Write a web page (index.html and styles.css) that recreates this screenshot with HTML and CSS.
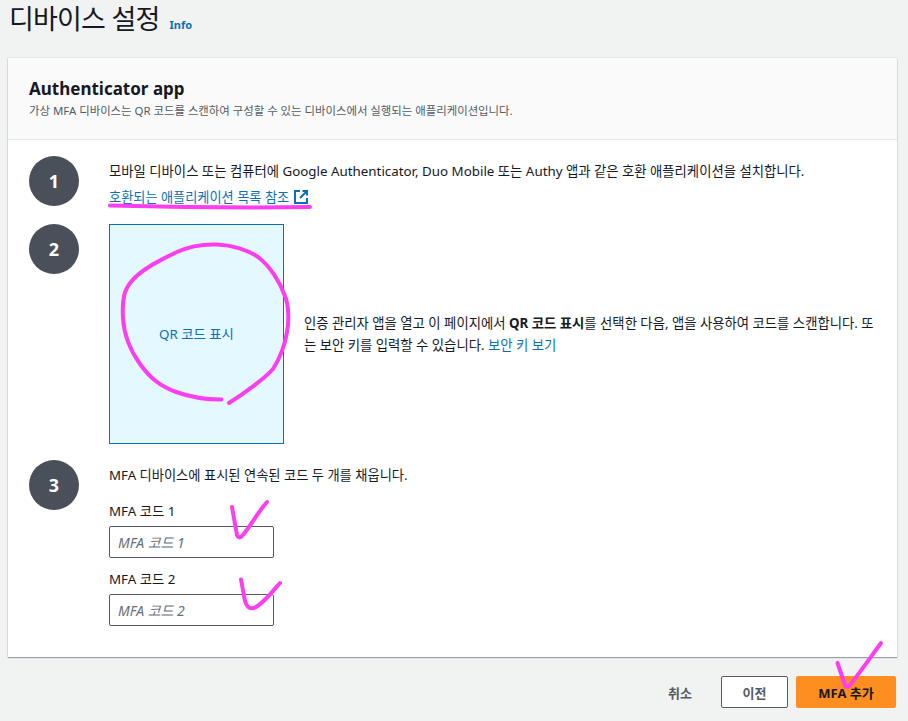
FILE: index.html
```html
<!DOCTYPE html>
<html lang="ko">
<head>
    <meta charset="UTF-8">
    <meta name="viewport" content="width=device-width, initial-scale=1.0">
    <title>디바이스 설정</title>
    <link rel="stylesheet" href="styles.css">
</head>
<body>
    <div class="page-title">
        <h1>디바이스 설정</h1>
        <a class="info-link" href="#">Info</a>
    </div>

    <div class="card">
        <div class="card-header">
            <h2>Authenticator app</h2>
            <p>가상 MFA 디바이스는 QR 코드를 스캔하여 구성할 수 있는 디바이스에서 실행되는 애플리케이션입니다.</p>
        </div>

        <div class="card-body">
            <div class="step">
                <div class="step-number">1</div>
                <div class="step-content">
                    <p class="step-text">모바일 디바이스 또는 컴퓨터에 Google Authenticator, Duo Mobile 또는 Authy 앱과 같은 호환 애플리케이션을 설치합니다.</p>
                    <a class="link external-link" href="#">호환되는 애플리케이션 목록 참조
                        <svg width="14" height="14" viewBox="0 0 14 14" fill="none" stroke="currentColor" stroke-width="2">
                            <path d="M6 1H1v12h12V8"/>
                            <path d="M8.5 1H13v4.5"/>
                            <path d="M13 1L6 8"/>
                        </svg>
                    </a>
                </div>
            </div>

            <div class="step">
                <div class="step-number">2</div>
                <div class="step-content qr-row">
                    <div class="qr-box"><a class="link" href="#">QR 코드 표시</a></div>
                    <p class="qr-text">인증 관리자 앱을 열고 이 페이지에서 <b>QR 코드 표시</b>를 선택한 다음, 앱을 사용하여 코드를 스캔합니다. 또는 보안 키를 입력할 수 있습니다. <a class="link" href="#">보안 키 보기</a></p>
                </div>
            </div>

            <div class="step">
                <div class="step-number">3</div>
                <div class="step-content">
                    <p class="step-text code-intro">MFA 디바이스에 표시된 연속된 코드 두 개를 채웁니다.</p>
                    <div class="form-group">
                        <label for="code1">MFA 코드 1</label>
                        <input type="text" id="code1" placeholder="MFA 코드 1">
                    </div>
                    <div class="form-group">
                        <label for="code2">MFA 코드 2</label>
                        <input type="text" id="code2" placeholder="MFA 코드 2">
                    </div>
                </div>
            </div>
        </div>
    </div>

    <div class="actions">
        <button class="btn-plain">취소</button>
        <button class="btn-normal">이전</button>
        <button class="btn-primary">MFA 추가</button>
    </div>

    <!-- pen marks drawn over the screenshot -->
    <svg class="scribbles" width="908" height="721" viewBox="0 0 908 721" fill="none" stroke="#fd3df0" stroke-width="4" stroke-linecap="round" stroke-linejoin="round">
        <path d="M110 205.5C170 207 250 208 310 207"/>
        <path d="M221.5 399.5C205 399.500 190 397 176 392C160 386 150 378 140 364C130 350 124 336 123 318C122 300 124 290 131 282C140 270 160 260 177 252C190 246 205 244 217 244.500C232 245 248 250 258 257C270 266 280 282 285 296C289 306 289 322 287 332C285 345 280 358 273 369C265 378 245 393 229 403"/>
        <path d="M232 507L237 535C238 538 240 538 242 536C250 527 258 512 267 502"/>
        <path d="M241 579.500L245 601C247 608 250 609 254 608C262 605 272 592 280 583"/>
        <path d="M837.500 663L845 685C846 688 848 687 850 685C858 675 870 658 881 643"/>
    </svg>
</body>
</html>
```

FILE: styles.css
```css
body {
    font-family: "Noto Sans", "Noto Sans CJK KR", sans-serif;
    font-size: 13.35px;
    line-height: 22px;
    color: #16191f;
    margin: 0;
    height: 721px;
    overflow: hidden;
    background-color: #f1f3f3;
}

h1, h2, p {
    margin: 0;
}

.page-title {
    display: flex;
    align-items: baseline;
    gap: 10px;
    height: 58px;
    padding-left: 9px;
    box-sizing: border-box;
}

.page-title h1 {
    font-size: 27px;
    font-weight: 400;
    letter-spacing: -0.8px;
    line-height: 36px;
    margin-top: 1px;
}

.info-link {
    color: #0b6fb5;
    font-size: 11px;
    font-weight: 700;
    text-decoration: none;
}

.card {
    margin: 0 11px 0 8px;
    height: 599px;
    box-sizing: border-box;
    background: white;
    box-shadow: 0 1px 1px rgba(0, 28, 36, 0.35), 0 0 1px rgba(0, 28, 36, 0.3);
}

.card-header {
    height: 82px;
    box-sizing: border-box;
    padding: 20px 21px 0;
    background-color: #fafafa;
    border-bottom: 1px solid #e4e6e6;
}

.card-header h2 {
    font-size: 17px;
    font-weight: 700;
    line-height: 22px;
}

.card-header p {
    font-size: 11.4px;
    line-height: 22px;
    color: #545b64;
}

.card-body {
    display: flex;
    flex-direction: column;
    gap: 16px;
    padding: 16px 21px 0;
}

.step {
    display: flex;
    gap: 30px;
}

.step-number {
    flex: none;
    width: 50px;
    height: 50px;
    border-radius: 50%;
    background-color: #4a5059;
    color: white;
    font-size: 18px;
    font-weight: 700;
    line-height: 50px;
    text-align: center;
}

.step-content {
    flex: 1;
    min-width: 0;
    padding-top: 4px;
}

.code-intro {
    font-size: 13.25px;
}

.link {
    color: #0b6fb5;
    text-decoration: none;
}

.external-link {
    display: flex;
    align-items: center;
    gap: 5px;
    margin-top: 4px;
    font-size: 13.2px;
}

.qr-row {
    display: flex;
    align-items: center;
    gap: 20px;
    padding-top: 0;
}

.qr-box {
    flex: none;
    display: flex;
    align-items: center;
    justify-content: center;
    width: 175px;
    height: 220px;
    box-sizing: border-box;
    border: 1px solid #0b6fb5;
    background-color: #e3f8ff;
}

.qr-text {
    flex: 1;
}

.form-group {
    margin-top: 14px;
}

.form-group + .form-group {
    margin-top: 10px;
}

label {
    display: block;
    margin-bottom: 4px;
}

input[type="text"] {
    display: block;
    width: 165px;
    height: 32px;
    padding: 0 8px;
    border: 1px solid #545b64;
    border-radius: 2px;
    box-sizing: border-box;
    font-family: inherit;
    font-size: 14px;
}

input::placeholder {
    color: #687078;
    font-style: italic;
}

.actions {
    display: flex;
    align-items: center;
    justify-content: flex-end;
    gap: 8px;
    padding: 19px 12px 0 0;
}

button {
    height: 32px;
    padding: 0;
    border-radius: 2px;
    font-family: inherit;
    font-size: 13px;
    font-weight: 700;
    cursor: pointer;
}

.btn-plain {
    width: 50px;
    margin-right: 8px;
    border: none;
    background: none;
    color: #545b64;
}

.btn-normal {
    width: 67px;
    border: 1px solid #545b64;
    background-color: white;
    color: #545b64;
}

.btn-primary {
    width: 100px;
    border: none;
    background-color: #fe8e20;
    color: #16191f;
}

.scribbles {
    position: absolute;
    top: 0;
    left: 0;
    pointer-events: none;
}
```
